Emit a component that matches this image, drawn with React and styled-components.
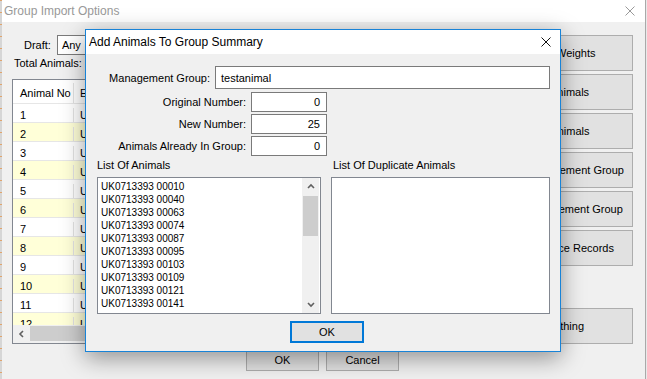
import styled, { createGlobalStyle } from "styled-components";

// -------------------- ESTILOS -------------------- //
const GlobalStyle = createGlobalStyle`
  html, body {
    margin: 0;
    padding: 0;
    background: #e9e9e9;
  }
  body {
    font-family: "Liberation Sans", Arial, sans-serif;
    font-size: 11px;
    color: #000;
  }
  * {
    box-sizing: border-box;
  }
`;

const Screen = styled.div`
  position: relative;
  width: 647px;
  height: 379px;
  overflow: hidden;
  display: flex;
  background: #e9e9e9;
`;

const DesktopEdge = styled.div`
  width: 2px;
  background: repeating-linear-gradient(to bottom, #e0a46c 0 1px, #d6d6d6 1px 12px);
`;

const Window = styled.div`
  width: 644px;
  display: flex;
  flex-direction: column;
  background: #f0f0f0;
  border-right: 1px solid #a9a9a9;
`;

const TitleBar = styled.div`
  height: 22px;
  flex-shrink: 0;
  display: flex;
  align-items: center;
  justify-content: space-between;
  padding: 0 10px 0 2px;
  background: #fff;
  color: #999;
  font-size: 12px;
`;

const WindowBody = styled.div`
  flex: 1;
  display: flex;
  flex-direction: column;
  padding: 13px 12px 0 10px;
`;

const MainRow = styled.div`
  display: flex;
  justify-content: space-between;
`;

const LeftColumn = styled.div`
  width: 458px;
  display: flex;
  flex-direction: column;
`;

const DraftRow = styled.div`
  height: 20px;
  display: flex;
  align-items: center;
  padding-left: 12px;
  gap: 6px;
`;

const Combo = styled.div`
  flex: 1;
  height: 20px;
  display: flex;
  align-items: center;
  padding-left: 4px;
  background: #fff;
  border: 1px solid #7a7a7a;
`;

const TotalLine = styled.div`
  margin-top: 2px;
  padding-left: 2px;
  line-height: 13px;
`;

const Grid = styled.div`
  margin-top: 9px;
  height: 265px;
  display: flex;
  flex-direction: column;
  background: #fff;
  border: 1px solid #828790;
`;

const GridRows = styled.div`
  flex: 1;
  overflow: hidden;
`;

const GridRow = styled.div`
  display: grid;
  grid-template-columns: 61px 1fr;
  height: ${({ $header }) => ($header ? "24px" : "19px")};
  padding-top: ${({ $header }) => ($header ? "3px" : "4px")};
  background: ${({ $alt }) => ($alt ? "#ffffd8" : "#fff")};
  border-bottom: 1px solid #e6e6e6;
`;

const GridCell = styled.div`
  display: flex;
  align-items: center;
  padding-left: ${({ $first }) => ($first ? "7px" : "6px")};
  border-right: ${({ $first }) => ($first ? "1px solid #e3e3e3" : "none")};
  white-space: nowrap;
  overflow: hidden;
`;

const HScroll = styled.div`
  height: 18px;
  flex-shrink: 0;
  display: flex;
  background: #f0f0f0;
`;

const ScrollArrow = styled.div`
  width: 17px;
  height: 17px;
  display: flex;
  align-items: center;
  justify-content: center;
`;

const HThumb = styled.div`
  flex: 1;
  margin: 1px 0 2px;
  background: #cdcdcd;
`;

const ButtonColumn = styled.div`
  width: 153px;
  display: flex;
  flex-direction: column;
  gap: 3px;
`;

const SideButton = styled.div`
  height: 36px;
  margin-top: ${({ $spaced }) => ($spaced ? "39px" : "0")};
  display: flex;
  align-items: center;
  justify-content: center;
  background: #e1e1e1;
  border: 1px solid #adadad;
  white-space: nowrap;
`;

const Footer = styled.div`
  display: flex;
  justify-content: center;
  gap: 7px;
  margin-top: 4px;
`;

const Button = styled.div`
  width: ${({ $w }) => $w || "73px"};
  height: ${({ $h }) => $h || "23px"};
  display: flex;
  align-items: center;
  justify-content: center;
  background: #e1e1e1;
  border: ${({ $default }) => ($default ? "2px solid #0078d7" : "1px solid #adadad")};
`;

// -------------------- DIALOGO -------------------- //
const Dialog = styled.div`
  position: absolute;
  left: 85px;
  top: 29px;
  width: 476px;
  height: 323px;
  display: flex;
  flex-direction: column;
  background: #f0f0f0;
  border: 1px solid #1883d7;
  box-shadow: 0 6px 22px rgba(0, 0, 0, 0.4);
`;

const DialogTitle = styled.div`
  height: 24px;
  flex-shrink: 0;
  display: flex;
  align-items: center;
  justify-content: space-between;
  padding: 0 9px 0 3px;
  background: #fff;
  font-size: 12px;
`;

const DialogBody = styled.div`
  flex: 1;
  display: flex;
  flex-direction: column;
  padding-top: 12px;
`;

const FieldRow = styled.div`
  display: flex;
  align-items: center;
  gap: 5px;
  margin-bottom: ${({ $gap }) => $gap || "2px"};
`;

const FieldLabel = styled.div`
  width: ${({ $w }) => $w};
  text-align: right;
`;

const Input = styled.div`
  width: ${({ $w }) => $w};
  height: ${({ $h }) => $h};
  display: flex;
  align-items: center;
  justify-content: ${({ $right }) => ($right ? "flex-end" : "flex-start")};
  padding: 0 6px 0 5px;
  background: #fff;
  border: 1px solid #7a7a7a;
`;

const ListsRow = styled.div`
  display: flex;
  gap: 10px;
  padding: 0 10px 0 11px;
  margin-top: 1px;
`;

const ListColumn = styled.div`
  width: ${({ $w }) => $w};
  display: flex;
  flex-direction: column;
`;

const ListLabel = styled.div`
  line-height: 13px;
  margin-bottom: 5px;
  padding-left: ${({ $indent }) => $indent || "0"};
`;

const ListBox = styled.div`
  height: 137px;
  display: flex;
  background: #fff;
  border: 1px solid #828790;
`;

const ListItems = styled.div`
  flex: 1;
  padding: 2px 0 0 3px;
  font-size: 10px;
  line-height: 13px;
  overflow: hidden;
`;

const VScroll = styled.div`
  width: 17px;
  margin-right: 1px;
  display: flex;
  flex-direction: column;
  background: #f0f0f0;
`;

const VThumb = styled.div`
  height: 40px;
  margin: 1px 1px 0;
  background: #cdcdcd;
`;

const Spacer = styled.div`
  flex: 1;
`;

const DialogFooter = styled.div`
  display: flex;
  padding-left: 204px;
  margin-top: 7px;
`;

// -------------------- ICONOS -------------------- //
const CloseIcon = ({ color, size = 10 }) => (
  <svg width={size} height={size} viewBox="0 0 10 10">
    <path d="M0.5 0.5 L9.5 9.5 M9.5 0.5 L0.5 9.5" stroke={color} strokeWidth="1" fill="none" />
  </svg>
);

const Chevron = ({ dir }) => {
  const d = {
    up: "M1 5 L4 2 L7 5",
    down: "M1 2 L4 5 L7 2",
    left: "M5 1 L2 4 L5 7",
  }[dir];
  return (
    <svg width="8" height="8" viewBox="0 0 8 8">
      <path d={d} stroke="#606060" strokeWidth="1.6" fill="none" />
    </svg>
  );
};

// -------------------- DATOS -------------------- //
const tags = [
  "00010", "00040", "00063", "00074", "00087", "00095",
  "00103", "00109", "00121", "00141", "00152", "00167",
];

const sideButtons = [
  "Update Weights",
  "View Animals",
  "Load Animals",
  "Add To Management Group",
  "Set As Management Group",
  "Import Service Records",
];

// -------------------- COMPONENTE -------------------- //
export default function App() {
  return (
    <Screen>
      <GlobalStyle />
      <DesktopEdge />
      <Window>
        <TitleBar>
          <span>Group Import Options</span>
          <CloseIcon color="#999" />
        </TitleBar>
        <WindowBody>
          <MainRow>
            <LeftColumn>
              <DraftRow>
                <span>Draft:</span>
                <Combo>Any</Combo>
              </DraftRow>
              <TotalLine>Total Animals:</TotalLine>
              <Grid>
                <GridRow $header>
                  <GridCell $first>Animal No</GridCell>
                  <GridCell>EID</GridCell>
                </GridRow>
                <GridRows>
                  {tags.map((t, i) => (
                    <GridRow key={t} $alt={i % 2 === 1}>
                      <GridCell $first>{i + 1}</GridCell>
                      <GridCell>UK</GridCell>
                    </GridRow>
                  ))}
                </GridRows>
                <HScroll>
                  <ScrollArrow>
                    <Chevron dir="left" />
                  </ScrollArrow>
                  <HThumb />
                </HScroll>
              </Grid>
            </LeftColumn>
            <ButtonColumn>
              {sideButtons.map((b) => (
                <SideButton key={b}>{b}</SideButton>
              ))}
              <SideButton $spaced>Do Nothing</SideButton>
            </ButtonColumn>
          </MainRow>
          <Footer>
            <Button>OK</Button>
            <Button>Cancel</Button>
          </Footer>
        </WindowBody>
      </Window>

      <Dialog>
        <DialogTitle>
          <span>Add Animals To Group Summary</span>
          <CloseIcon color="#111" />
        </DialogTitle>
        <DialogBody>
          <FieldRow $gap="3px">
            <FieldLabel $w="124px">Management Group:</FieldLabel>
            <Input $w="335px" $h="23px">testanimal</Input>
          </FieldRow>
          <FieldRow>
            <FieldLabel $w="160px">Original Number:</FieldLabel>
            <Input $w="76px" $h="20px" $right>0</Input>
          </FieldRow>
          <FieldRow>
            <FieldLabel $w="160px">New Number:</FieldLabel>
            <Input $w="76px" $h="20px" $right>25</Input>
          </FieldRow>
          <FieldRow>
            <FieldLabel $w="160px">Animals Already In Group:</FieldLabel>
            <Input $w="76px" $h="20px" $right>0</Input>
          </FieldRow>
          <ListsRow>
            <ListColumn $w="224px">
              <ListLabel>List Of Animals</ListLabel>
              <ListBox>
                <ListItems>
                  {tags.slice(0, 10).map((t) => (
                    <div key={t}>UK0713393 {t}</div>
                  ))}
                </ListItems>
                <VScroll>
                  <ScrollArrow>
                    <Chevron dir="up" />
                  </ScrollArrow>
                  <VThumb />
                  <Spacer />
                  <ScrollArrow>
                    <Chevron dir="down" />
                  </ScrollArrow>
                </VScroll>
              </ListBox>
            </ListColumn>
            <ListColumn $w="219px">
              <ListLabel $indent="2px">List Of Duplicate Animals</ListLabel>
              <ListBox />
            </ListColumn>
          </ListsRow>
          <DialogFooter>
            <Button $default $w="74px" $h="22px">OK</Button>
          </DialogFooter>
        </DialogBody>
      </Dialog>
    </Screen>
  );
}
